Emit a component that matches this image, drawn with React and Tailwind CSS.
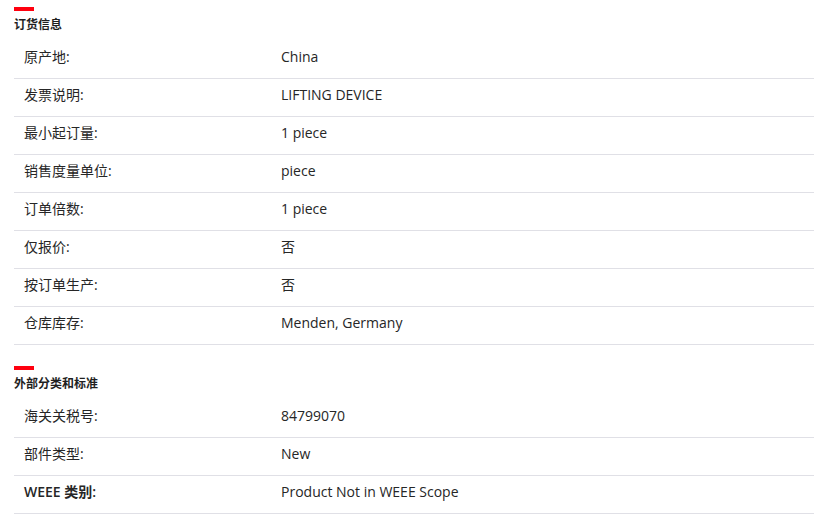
const sections = [
  {
    title: '订货信息',
    rows: [
      ['原产地:', 'China'],
      ['发票说明:', 'LIFTING DEVICE'],
      ['最小起订量:', '1 piece'],
      ['销售度量单位:', 'piece'],
      ['订单倍数:', '1 piece'],
      ['仅报价:', '否'],
      ['按订单生产:', '否'],
      ['仓库库存:', 'Menden, Germany'],
    ],
  },
  {
    title: '外部分类和标准',
    rows: [
      ['海关关税号:', '84799070'],
      ['部件类型:', 'New'],
      ['WEEE 类别:', 'Product Not in WEEE Scope', true],
    ],
  },
]

const Section = ({ title, rows }) => (
  <div className="pt-[7px]">
    <div className="h-1 w-5 bg-[#ff000f]"></div>
    <div className="mt-[4px] h-[20px] text-[12px] leading-[20px] font-bold text-[#1f1f1f]">{title}</div>
    <div className="mt-[6px]">
      {rows.map(([label, value, strong]) => (
        <div key={label} className="flex h-[38px] items-center pb-[6px] border-b border-[#e0e0e6] text-[14px] text-[#262626]">
          <div className={`w-[267px] pl-[10px] ${strong ? 'font-semibold' : ''}`}>{label}</div>
          <div>{value}</div>
        </div>
      ))}
    </div>
  </div>
)

export default function App() {
  return (
    <div className="min-h-screen bg-white pl-[14px] pr-[20px] font-['Open_Sans','Noto_Sans_CJK_SC',sans-serif]">
      <Section {...sections[0]} />
      <div className="mt-[14px]">
        <Section {...sections[1]} />
      </div>
    </div>
  )
}
